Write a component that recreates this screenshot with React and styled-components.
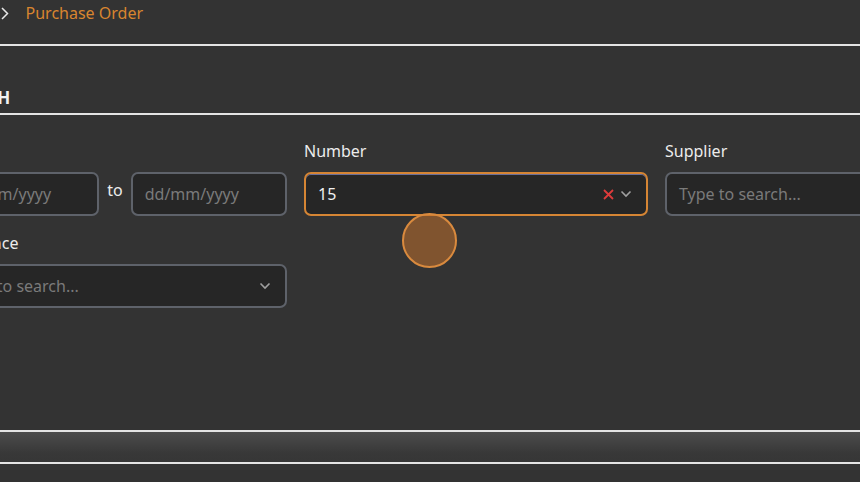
import React from 'react'
import styled, { createGlobalStyle } from 'styled-components'

const GlobalStyle = createGlobalStyle`
  html, body {
    margin: 0;
    padding: 0;
    background: #333333;
    font-family: "Noto Sans", "Open Sans", sans-serif;
    color: #e8e8e8;
  }
  * { box-sizing: border-box; }
`

const Page = styled.div`
  position: relative;
  width: 860px;
  height: 482px;
  overflow: hidden;
  background: #333333;
`

const Crumbs = styled.div`
  display: flex;
  align-items: flex-start;
  gap: 12px;
  height: 46px;
  padding-top: 2px;
  margin-left: -58px;
  border-bottom: 2px solid #e4e4e4;
  font-size: 16px;
  line-height: 22px;
`

const Crumb = styled.span`
  color: ${p => (p.$active ? '#d9852f' : '#e8e8e8')};
`

const Sep = styled.svg`
  width: 10px;
  height: 22px;
  margin-right: 4px;
`

const Heading = styled.h2`
  margin: 0 0 0 -57px;
  height: 69px;
  padding-top: 41px;
  font-size: 17px;
  line-height: 22px;
  font-weight: 700;
  letter-spacing: 0.3px;
  color: #f2f2f2;
  border-bottom: 2px solid #e4e4e4;
`

const Form = styled.div`
  display: grid;
  grid-template-columns: 344px 344px 344px;
  align-content: start;
  column-gap: 17px;
  row-gap: 16px;
  margin-left: -57px;
  padding-top: 25px;
  height: 317px;
  border-bottom: 2px solid #e4e4e4;
`

const Field = styled.div`
  display: flex;
  flex-direction: column;
  gap: 10px;
`

const Label = styled.label`
  font-size: 16px;
  line-height: 22px;
  color: #ececec;
`

const Range = styled.div`
  display: flex;
  align-items: center;
  gap: 8px;
`

const To = styled.span`
  font-size: 16px;
  line-height: 22px;
  color: #ececec;
  margin-top: -8px;
`

const Box = styled.div`
  flex: ${p => (p.$half ? '1 1 0' : 'none')};
  display: flex;
  align-items: center;
  height: 44px;
  padding: 0 14px 0 12px;
  border-radius: 7px;
  background: #262626;
  border: 2px solid ${p => (p.$focused ? '#d58534' : '#5e626a')};
  box-shadow: ${p => (p.$focused ? 'inset 0 1px 0 #6a6f9a' : 'none')};
  font-size: 16px;
`

const Value = styled.span`
  flex: 1;
  color: ${p => (p.$placeholder ? '#7a7a7a' : '#f0f0f0')};
  white-space: nowrap;
`

const Icons = styled.span`
  display: flex;
  align-items: center;
  gap: 6px;
`

const Band = styled.div`
  height: 32px;
  background: linear-gradient(#4c4c4c, #383838 70%, #363636);
  border-bottom: 2px solid #e4e4e4;
`

const Cursor = styled.div`
  position: absolute;
  left: 402px;
  top: 213px;
  width: 55px;
  height: 55px;
  border-radius: 50%;
  background: rgba(200, 115, 45, 0.52);
  border: 2px solid #d98a3e;
`

const Chevron = () => (
  <svg width="12" height="8" viewBox="0 0 12 8">
    <path d="M1.5 1.5 L6 6 L10.5 1.5" fill="none" stroke="#a0a0a0" strokeWidth="1.6" />
  </svg>
)

const Clear = () => (
  <svg width="11" height="11" viewBox="0 0 11 11">
    <path d="M1 1 L10 10 M10 1 L1 10" fill="none" stroke="#de3b3b" strokeWidth="1.8" />
  </svg>
)

export default function App() {
  return (
    <Page>
      <GlobalStyle />
      <Crumbs>
        <Crumb>Home</Crumb>
        <Sep viewBox="0 0 10 22">
          <path d="M2 6 L7.5 11.5 L2 17" fill="none" stroke="#e8e8e8" strokeWidth="1.5" />
        </Sep>
        <Crumb $active>Purchase Order</Crumb>
      </Crumbs>
      <Heading>SEARCH</Heading>
      <Form>
        <Field>
          <Label>Date</Label>
          <Range>
            <Box $half><Value $placeholder>dd/mm/yyyy</Value></Box>
            <To>to</To>
            <Box $half><Value $placeholder>dd/mm/yyyy</Value></Box>
          </Range>
        </Field>
        <Field>
          <Label>Number</Label>
          <Box $focused>
            <Value>15</Value>
            <Icons><Clear /><Chevron /></Icons>
          </Box>
        </Field>
        <Field>
          <Label>Supplier</Label>
          <Box><Value $placeholder>Type to search...</Value></Box>
        </Field>
        <Field>
          <Label>Reference</Label>
          <Box>
            <Value $placeholder>Type to search...</Value>
            <Icons><Chevron /></Icons>
          </Box>
        </Field>
      </Form>
      <Band />
      <Cursor />
    </Page>
  )
}
